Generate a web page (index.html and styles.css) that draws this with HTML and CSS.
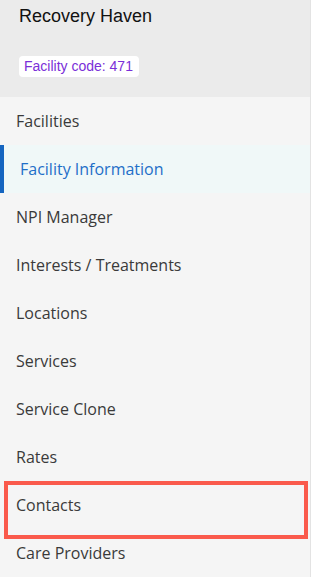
FILE: index.html
```html
<!DOCTYPE html>
<html lang="en">
<head>
  <meta charset="UTF-8">
  <meta name="viewport" content="width=device-width, initial-scale=1.0">
  <title>Recovery Haven</title>
  <link rel="stylesheet" href="styles.css">
</head>
<body>

<div class="sidebar">
  <div class="facility-header">
    <div class="facility-name">Recovery Haven</div>
    <span class="facility-code">Facility code: 471</span>
  </div>

  <ul class="nav">
    <li class="nav-item">Facilities</li>
    <li class="nav-item active">Facility Information</li>
    <li class="nav-item">NPI Manager</li>
    <li class="nav-item">Interests / Treatments</li>
    <li class="nav-item">Locations</li>
    <li class="nav-item">Services</li>
    <li class="nav-item">Service Clone</li>
    <li class="nav-item">Rates</li>
    <li class="nav-item highlighted">Contacts</li>
    <li class="nav-item">Care Providers</li>
  </ul>
</div>

</body>
</html>
```

FILE: styles.css
```css
body {
  margin: 0;
  background-color: #f5f5f5;
}
.sidebar {
  box-sizing: border-box;
  width: 311px;
  min-height: 100vh;
  background-color: #f5f5f5;
  border-right: 1px solid #e3e3e3;
}
.facility-header {
  background-color: #ebebeb;
  padding: 6px 19px 20px;
  font-family: "Liberation Sans", Arial, sans-serif;
}
.facility-name {
  font-size: 18px;
  line-height: 21px;
  color: #111;
}
.facility-code {
  display: inline-block;
  margin-top: 29px;
  padding: 2px 6px 3px 5px;
  font-size: 14px;
  line-height: 16px;
  color: #7a2fd8;
  background: white;
  border-radius: 4px;
}
.nav {
  list-style: none;
  margin: 0;
  padding: 0;
  font-family: "Open Sans", sans-serif;
}
.nav-item {
  position: relative;
  height: 48px;
  line-height: 48px;
  padding-left: 16px;
  font-size: 16px;
  color: #3a3a3a;
}
.nav-item.active {
  background-color: #f0f8f8;
  border-left: 4px solid #1565c0;
  color: #1f6fc8;
}
.nav-item.highlighted::after {
  content: "";
  position: absolute;
  top: 0;
  left: 4px;
  width: 304px;
  height: 58px;
  box-sizing: border-box;
  border: 4px solid #fa5a4c;
}
```
